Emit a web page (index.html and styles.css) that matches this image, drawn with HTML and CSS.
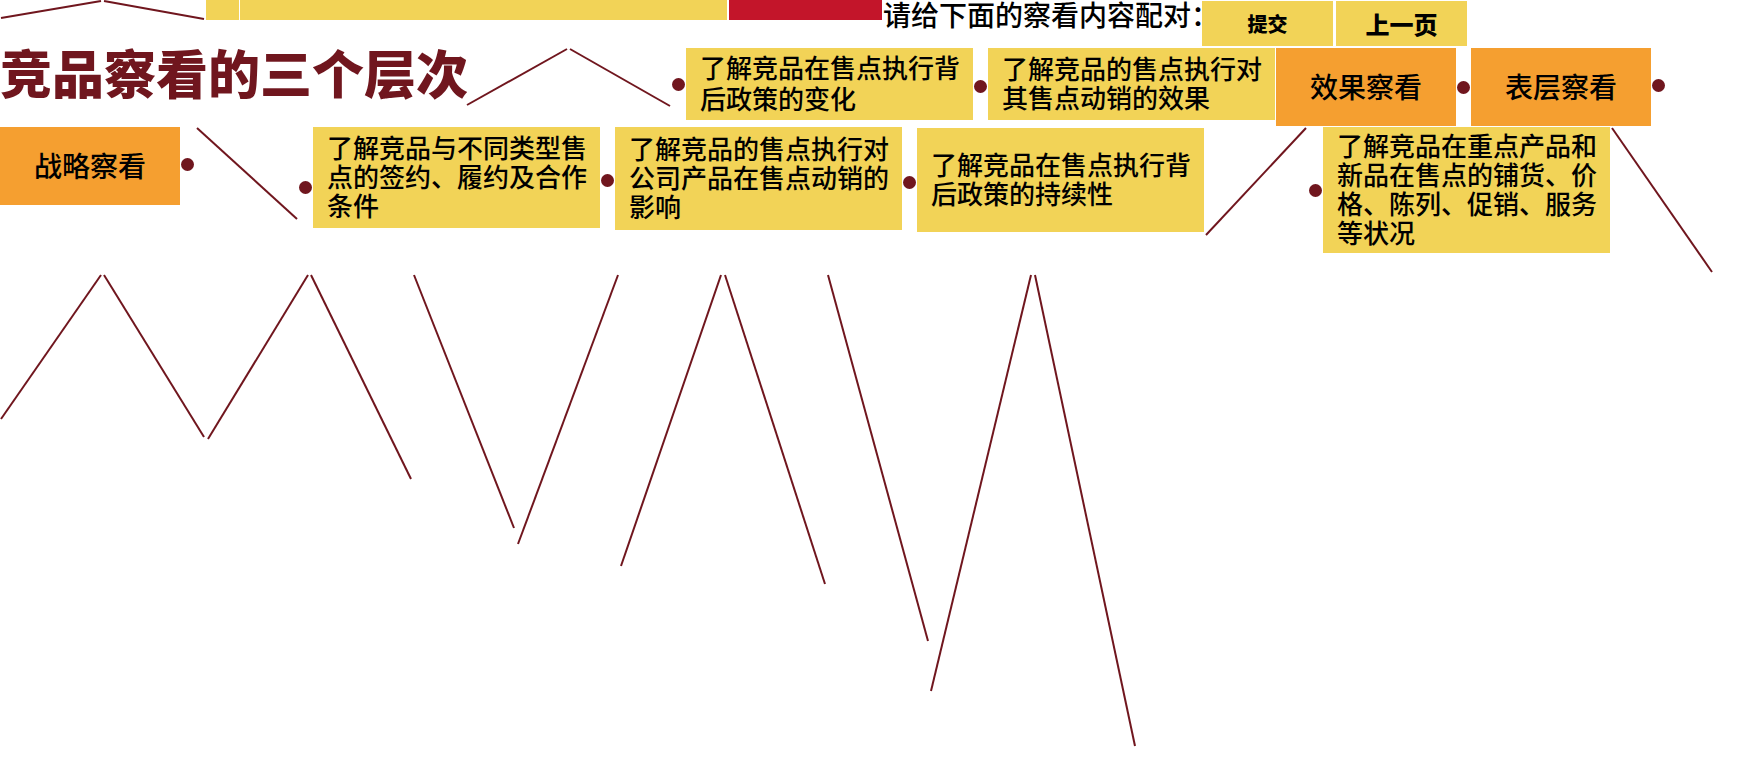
FILE: index.html
```html
<!DOCTYPE html>
<html lang="zh-CN">
<head>
<meta charset="utf-8">
<title>竞品察看的三个层次</title>
<link rel="stylesheet" href="styles.css">
</head>
<body>
<main class="sheet">
  <section class="row row-top">
    <svg class="line" width="103" height="20"><path d="M1 18L101 1"/></svg>
    <svg class="line" width="103" height="20"><path d="M1 1L101 19"/></svg>
    <span class="bar bar-small"></span>
    <span class="bar bar-long"></span>
    <span class="bar bar-red"></span>
    <p class="prompt">请给下面的察看内容配对：</p>
    <div class="actions">
      <button class="btn btn-submit" type="button">提交</button>
      <button class="btn btn-back" type="button">上一页</button>
    </div>
  </section>

  <section class="row row-title">
    <h1 class="title">竞品察看的三个层次</h1>
    <svg class="line" width="103" height="60"><path d="M2 57L102 1"/></svg>
    <svg class="line" width="103" height="60"><path d="M2 1L102 58"/></svg>
    <div class="item"><span class="dot"></span><div class="card short loose">了解竞品在售点执行背后政策的变化</div></div>
    <div class="item"><span class="dot dot-low"></span><div class="card short">了解竞品的售点执行对其售点动销的效果</div></div>
    <div class="item level-first"><div class="level">效果察看</div><span class="dot"></span></div>
    <div class="item"><div class="level">表层察看</div><span class="dot dot-high"></span></div>
  </section>

  <section class="row row-cards">
    <div class="item"><div class="level">战略察看</div><span class="dot dot-high"></span></div>
    <svg class="line" width="103" height="94"><path d="M2 1L102 92"/></svg>
    <div class="item"><span class="dot dot-deep"></span><div class="card medium">了解竞品与不同类型售点的签约、履约及合作条件</div></div>
    <div class="item"><span class="dot dot-low"></span><div class="card tall">了解竞品的售点执行对公司产品在售点动销的影响</div></div>
    <div class="item item-last"><span class="dot dot-low"></span><div class="card taller">了解竞品在售点执行背后政策的持续性</div></div>
    <svg class="line line-match" width="103" height="110"><path d="M1 108L101 1"/></svg>
    <div class="item"><span class="dot"></span><div class="card full">了解竞品在重点产品和新品在售点的铺货、价格、陈列、促销、服务等状况</div></div>
    <svg class="line" width="103" height="148"><path d="M2 1L102 145"/></svg>
  </section>

  <section class="lines">
    <svg class="line" width="103" height="147"><path d="M1 144L101 0"/></svg>
    <svg class="line" width="103" height="165"><path d="M1 0L101 162"/></svg>
    <svg class="line" width="103" height="167"><path d="M1 164L101 0"/></svg>
    <svg class="line" width="103" height="207"><path d="M1 0L101 204"/></svg>
    <svg class="line" width="103" height="256"><path d="M1 0L101 253"/></svg>
    <svg class="line" width="103" height="272"><path d="M1 269L101 0"/></svg>
    <svg class="line" width="103" height="294"><path d="M1 291L101 0"/></svg>
    <svg class="line" width="103" height="312"><path d="M1 0L101 309"/></svg>
    <svg class="line" width="103" height="369"><path d="M1 0L101 366"/></svg>
    <svg class="line" width="103" height="419"><path d="M1 416L101 0"/></svg>
    <svg class="line" width="103" height="474"><path d="M1 0L101 471"/></svg>
  </section>
</main>
</body>
</html>
```
FILE: styles.css
```css
:root {
  --wine: #70161e;
  --yellow: #f2d357;
  --orange: #f59f30;
  --red: #c3152a;
}

* { box-sizing: border-box; }

body {
  margin: 0;
  background: #fff;
  color: #000;
  font-family: "Noto Sans CJK SC", sans-serif;
  font-weight: 500;
}

.row {
  display: flex;
  align-items: flex-start;
}

.row > * { flex: none; }

.line {
  display: block;
  overflow: visible;
}

.line path {
  fill: none;
  stroke: var(--wine);
  stroke-width: 2;
}

.row-top { min-height: 48px; }

.bar { background: var(--yellow); height: 20px; }
.bar-small { width: 33px; margin-right: 1px; }
.bar-long { width: 487px; margin-right: 2px; }
.bar-red { width: 153px; margin-right: 1px; background: var(--red); }

/* The full-width colon's blank half runs under the first button. */
.prompt {
  margin: 0 -17px 0 0;
  white-space: nowrap;
  font-size: 28px;
  line-height: 28px;
}

.actions {
  display: flex;
  gap: 3px;
  padding-top: 1px;
}

.btn {
  width: 131px;
  height: 45px;
  padding: 1px 0 0;
  border: 0;
  background: var(--yellow);
  color: #000;
  font-family: inherit;
  font-weight: 900;
  line-height: 28px;
}

.btn-submit { font-size: 20px; }
.btn-back { font-size: 24px; }

.row-title { min-height: 79px; }

.title {
  width: 465px;
  margin: 0;
  color: var(--wine);
  font-size: 52px;
  font-weight: 900;
  line-height: 48px;
  white-space: nowrap;
}

.item {
  display: flex;
  align-items: center;
}

.item-last { margin-top: 1px; }

.dot {
  width: 13px;
  height: 13px;
  margin: 0 1px;
  border-radius: 50%;
  background: var(--wine);
}

.dot-low { margin-top: 4px; }
.dot-high { margin-bottom: 4px; }
.dot-deep { margin-top: 19px; }

.card {
  display: flex;
  align-items: center;
  width: 287px;
  padding: 0 13px 4px 14px;
  background: var(--yellow);
  font-size: 26px;
  line-height: 29px;
}

.short { min-height: 72px; }
.medium { min-height: 101px; }
.tall { min-height: 103px; }
.taller { min-height: 104px; }
.full { min-height: 126px; }
.loose { line-height: 31px; }

.level {
  width: 180px;
  padding: 24px 0 26px;
  background: var(--orange);
  font-size: 28px;
  line-height: 28px;
  text-align: center;
}

.level-first { margin-left: 1px; }

.row-cards { min-height: 148px; }
.line-match { margin-left: 1px; }

.lines {
  display: grid;
  grid-template-columns: repeat(11, 1fr);
  align-items: start;
  width: 1137px;
}
```
